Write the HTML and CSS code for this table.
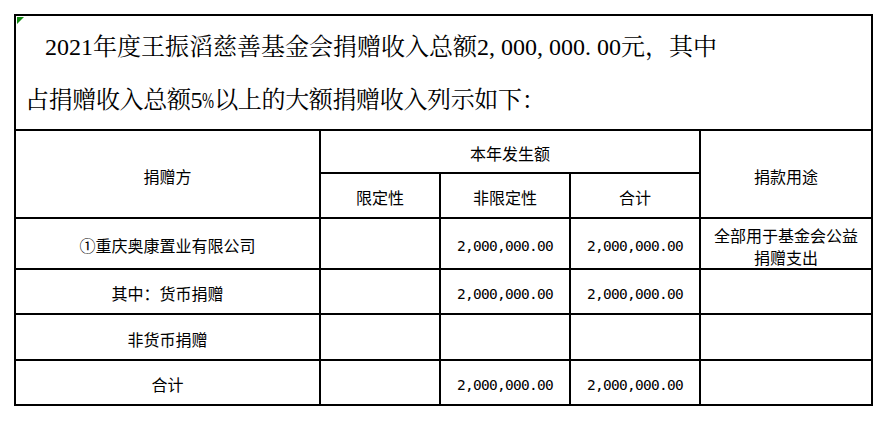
FILE: index.html
```html
<!DOCTYPE html>
<html lang="zh-CN">
<head>
<meta charset="utf-8">
<title>捐赠收入</title>
<link rel="stylesheet" href="styles.css">
</head>
<body>
<div class="page">
<table class="report">
<colgroup>
<col class="c1"><col class="c2"><col class="c3"><col class="c4"><col class="c5">
</colgroup>
<tr class="r-title">
<td colspan="5" class="title"><span class="mark"></span><div class="title-text"><span class="line1"><span class="indent"></span>2021年度王振滔慈善基金会捐赠收入总额2<i class="pc">,</i>000<i class="pc">,</i>000<i class="pc">.</i>00元，其中</span><br><span class="line2">占捐赠收入总额5<i class="pct">%</i>以上的大额捐赠收入列示如下：</span></div></td>
</tr>
<tr class="r-h1">
<td rowspan="2">捐赠方</td>
<td colspan="3">本年发生额</td>
<td rowspan="2">捐款用途</td>
</tr>
<tr class="r-h2">
<td>限定性</td>
<td>非限定性</td>
<td>合计</td>
</tr>
<tr class="r-1">
<td>①重庆奥康置业有限公司</td>
<td></td>
<td><span class="num">2,000,000.00</span></td>
<td><span class="num">2,000,000.00</span></td>
<td class="use"><span class="use-line">全部用于基金会公益</span><span class="use-line">捐赠支出</span></td>
</tr>
<tr class="r-2">
<td>其中：货币捐赠</td>
<td></td>
<td><span class="num">2,000,000.00</span></td>
<td><span class="num">2,000,000.00</span></td>
<td></td>
</tr>
<tr class="r-3">
<td>非货币捐赠</td>
<td></td>
<td></td>
<td></td>
<td></td>
</tr>
<tr class="r-4">
<td>合计</td>
<td></td>
<td><span class="num">2,000,000.00</span></td>
<td><span class="num">2,000,000.00</span></td>
<td></td>
</tr>
</table>
</div>
</body>
</html>
```

FILE: styles.css
```css
html, body {
  margin: 0;
  padding: 0;
  background: #fff;
}

.page {
  padding: 14px 0 0 14px;
}

.report {
  border-collapse: collapse;
  table-layout: fixed;
  width: 859px;
  font-family: "Noto Sans CJK SC", sans-serif;
  font-size: 16px;
  color: #000;
}

.c1 { width: 305px; }
.c2 { width: 120px; }
.c3 { width: 130px; }
.c4 { width: 130px; }
.c5 { width: 172px; }

.report td {
  border: 2px solid #000;
  padding: 4px 0 0 0;
  text-align: center;
  vertical-align: middle;
  line-height: 21px;
}

.r-title { height: 115px; }
.r-h1 { height: 43px; }
.r-h2 { height: 45px; }
.r-1 { height: 51px; }
.r-2 { height: 45px; }
.r-3 { height: 46px; }
.r-4 { height: 45px; }

.report td.title {
  position: relative;
  text-align: left;
  vertical-align: top;
  padding: 5px 0 0 9px;
}

.mark {
  position: absolute;
  left: 1px;
  top: 1px;
  width: 0;
  height: 0;
  border-top: 7px solid #118a11;
  border-right: 7px solid transparent;
}

.title-text {
  font-family: "Liberation Serif", "Noto Serif CJK SC", "Noto Sans CJK SC", serif;
  font-size: 24px;
  line-height: 53px;
  white-space: nowrap;
}

.line2 {
  letter-spacing: -0.35px;
}

.indent {
  display: inline-block;
  width: 20px;
}

.pc {
  display: inline-block;
  width: 12px;
  font-style: normal;
}

.pct {
  display: inline-block;
  width: 12px;
  font-style: normal;
  transform: scaleX(0.6);
  transform-origin: left center;
}

.num {
  font-family: "DejaVu Sans Mono", monospace;
  font-size: 14.5px;
  letter-spacing: -0.73px;
}

.use-line {
  display: block;
  line-height: 22px;
}
```
